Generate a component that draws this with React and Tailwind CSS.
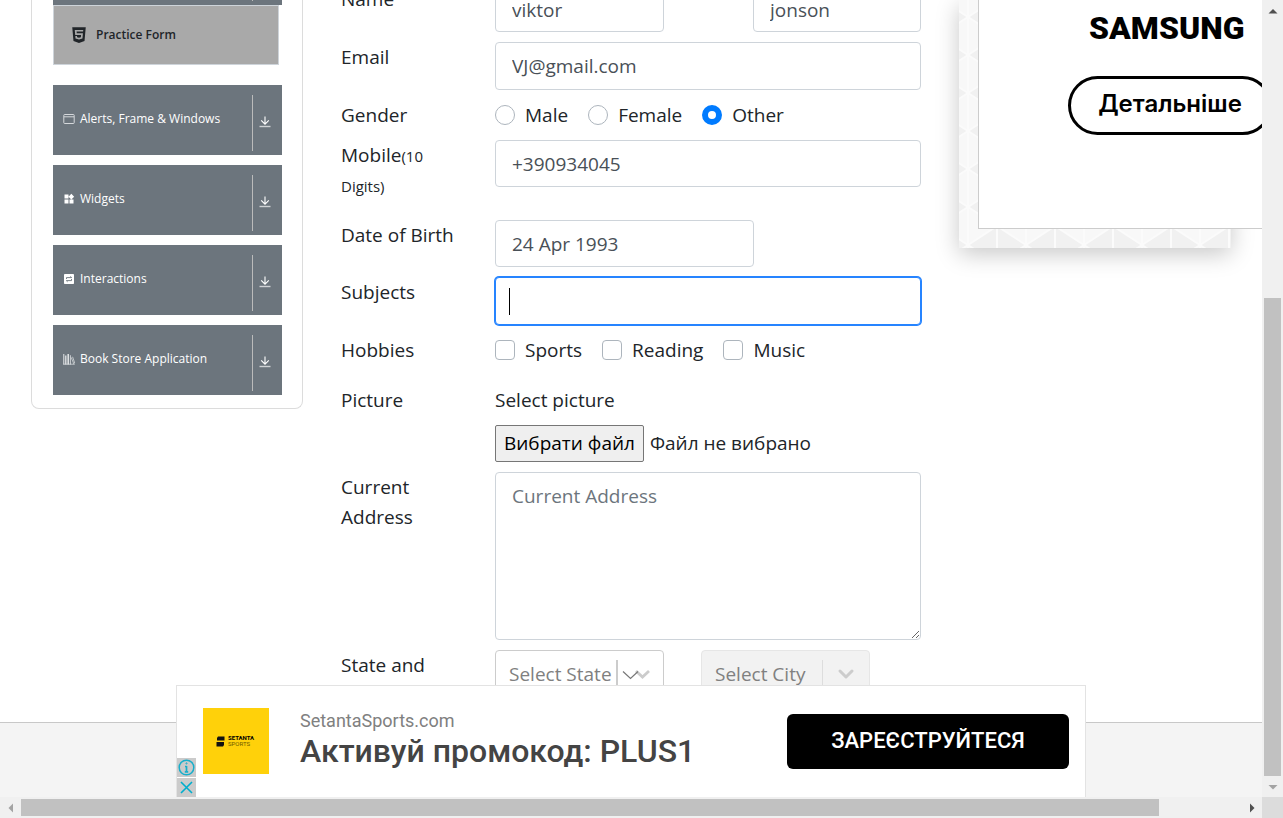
import { useState } from "react";
import { FaHtml5 } from "react-icons/fa";
import { MdWidgets } from "react-icons/md";
import { ChevronDown } from "lucide-react";

const field =
  "rounded border border-[#ced4da] bg-white px-4 text-[19px] text-[#495057] outline-none";

function DownIcon() {
  return (
    <svg viewBox="0 0 12 12" className="size-3" fill="none" stroke="#fff">
      <path d="M6 0.5V8M2.2 4.4L6 8.2L9.8 4.4" strokeWidth="1.1" />
      <path d="M0.5 10.5H11.5" strokeWidth="1.4" stroke="#d0d3d6" />
    </svg>
  );
}

function WindowIcon() {
  return (
    <svg viewBox="0 0 12 12" className="size-3" fill="none" stroke="#d5d8db">
      <rect x="0.8" y="1.5" width="10.4" height="9" rx="0.8" />
      <path d="M1 3.8H11" />
    </svg>
  );
}

function SwapIcon() {
  return (
    <svg viewBox="0 0 12 12" className="size-3">
      <rect x="1" y="1" width="10" height="10" rx="0.8" fill="#fff" />
      <path
        d="M3.5 6V4.6H8.6M7.4 3.4L8.7 4.6M8.5 6V7.6H3.4M4.6 8.8L3.3 7.6"
        fill="none"
        stroke="#6c757d"
        strokeWidth="0.9"
      />
    </svg>
  );
}

function BooksIcon() {
  return (
    <svg viewBox="0 0 12 12" className="size-3" fill="none" stroke="#e4e6e8">
      <path d="M0.8 1V11.5" strokeWidth="1" />
      <path d="M2.8 2.5V11.5" strokeWidth="1.3" />
      <path d="M5.2 1V11.5" strokeWidth="1.5" />
      <path d="M7.4 2.2V11.5" strokeWidth="0.8" />
      <path d="M8.2 4.4L11 11.4M9.6 3.8L11.8 10.4" strokeWidth="0.7" />
      <path d="M0.3 11.2H11.6" strokeWidth="0.7" />
    </svg>
  );
}

const sections = [
  { title: "Alerts, Frame & Windows", icon: <WindowIcon /> },
  { title: "Widgets", icon: <MdWidgets className="size-3" /> },
  { title: "Interactions", icon: <SwapIcon /> },
  { title: "Book Store Application", icon: <BooksIcon /> },
];

function Sidebar() {
  return (
    <nav className="w-[272px] shrink-0 self-start rounded-b-lg border border-t-0 border-[#dcdcdc] pr-5 pb-[13px] pl-[21px]">
      <div className="flex h-[5px] justify-end bg-[#6c757d] pr-[29px]">
        <span className="h-px w-px bg-[#bbb]" />
      </div>
      <a
        href="#practice-form"
        className="mr-[3px] mb-5 flex h-[60px] items-center border border-[#ced4da] bg-[#a9a9a9] pl-4 text-[12px] font-semibold text-[#212529]"
      >
        <FaHtml5 className="mr-2 size-[18px]" />
        Practice Form
      </a>
      <div className="flex flex-col gap-2.5">
        {sections.map((s) => (
          <button
            key={s.title}
            type="button"
            className="flex h-[70px] items-start bg-[#6c757d] pt-2.5 text-left text-[12px] text-white"
          >
            <span className="flex h-12 flex-1 items-center gap-[5px] pl-2.5">
              {s.icon}
              {s.title}
            </span>
            <span className="flex h-14 w-[30px] items-center border-l border-[#bbb] pb-0.5 pl-1.5">
              <DownIcon />
            </span>
          </button>
        ))}
      </div>
    </nav>
  );
}

function Row({ label, htmlFor, className = "", children }) {
  const Label = htmlFor ? "label" : "span";
  return (
    <div className={`grid grid-cols-[88px_1fr] gap-x-[66px] ${className}`}>
      <Label htmlFor={htmlFor} className="leading-[30px]">
        {label}
      </Label>
      <div className="min-w-0">{children}</div>
    </div>
  );
}

function Choice({ type, name, label, ...rest }) {
  const shape =
    type === "radio"
      ? "rounded-full checked:border-[6px] checked:border-[#007bff]"
      : "rounded checked:bg-[#007bff]";
  return (
    <label className="flex items-center gap-2.5 leading-[30px]">
      <input
        type={type}
        name={name}
        className={`size-5 appearance-none border border-[#adb5bd] bg-white ${shape}`}
        {...rest}
      />
      {label}
    </label>
  );
}

function PracticeForm() {
  const [gender, setGender] = useState("Other");
  return (
    <form
      id="practice-form"
      className="ml-[38px] -mt-4 flex w-[580px] shrink-0 flex-col gap-2.5 text-[19px] text-[#212529]"
    >
      <Row label="Name" htmlFor="first">
        <div className="flex justify-between">
          <input id="first" defaultValue="viktor" className={`${field} h-12 w-[169px] pt-1`} />
          <input
            aria-label="Last name"
            defaultValue="jonson"
            className={`${field} h-12 w-[168px] pt-1`}
          />
        </div>
      </Row>
      <Row label="Email" htmlFor="email">
        <input id="email" defaultValue="VJ@gmail.com" className={`${field} h-12 w-full`} />
      </Row>
      <Row label="Gender" className="h-[30px]">
        <div className="flex gap-5">
          {["Male", "Female", "Other"].map((g) => (
            <Choice
              key={g}
              type="radio"
              name="gender"
              label={g}
              checked={gender === g}
              onChange={() => setGender(g)}
            />
          ))}
        </div>
      </Row>
      <Row
        htmlFor="mobile"
        className="h-[70px]"
        label={
          <>
            Mobile<small className="text-[15px] leading-none">(10 Digits)</small>
          </>
        }
      >
        <input id="mobile" defaultValue="+390934045" className={`${field} block h-[47px] w-full`} />
      </Row>
      <Row
        htmlFor="dob"
        className="h-[47px]"
        label={<span className="whitespace-nowrap">Date of Birth</span>}
      >
        <input id="dob" defaultValue="24 Apr 1993" className={`${field} block h-[47px] w-[259px]`} />
      </Row>
      <Row label="Subjects" htmlFor="subjects">
        <div className="flex h-12 items-center rounded border border-[#2684ff] bg-white px-[13px] ring-1 ring-[#2684ff]">
          <span className="h-[27px] w-px bg-black" />
          <input id="subjects" className="min-w-0 flex-1 bg-transparent outline-none" />
        </div>
      </Row>
      <Row label="Hobbies" className="h-10">
        <div className="flex gap-5">
          {["Sports", "Reading", "Music"].map((h) => (
            <Choice key={h} type="checkbox" name="hobbies" label={h} />
          ))}
        </div>
      </Row>
      <Row label="Picture">
        <p className="leading-[30px]">Select picture</p>
        <label className="mt-2.5 flex items-center gap-1.5">
          <input type="file" className="sr-only" />
          <span className="flex h-[37px] items-center rounded-xs border border-[#767676] bg-[#efefef] px-2 text-black">
            Вибрати файл
          </span>
          Файл не вибрано
        </label>
      </Row>
      <Row label="Current Address" htmlFor="address">
        <textarea
          id="address"
          placeholder="Current Address"
          className={`${field} block h-[168px] w-full resize py-2 leading-[30px] placeholder:text-[#6c757d]`}
        />
      </Row>
      <Row label="State and City" htmlFor="state">
        <div className="flex gap-[37px] text-[#808080]">
          <div className="relative">
            <select
              id="state"
              className="h-12 w-[169px] appearance-none rounded border border-[#ccc] bg-white pl-[13px]"
            >
              <option>Select State</option>
            </select>
            <span className="pointer-events-none absolute inset-y-0 right-3 flex items-center">
              <span className="mr-1 h-7 w-0.5 bg-[#ccc]" />
              <svg viewBox="0 0 30 20" className="h-5 w-[30px]" fill="none">
                <path d="M14 7L20.5 13L27 7" stroke="#ccc" strokeWidth="2.8" />
                <path d="M1 7.5L8.5 14.5L16 7.5" stroke="#777" strokeWidth="1.2" />
              </svg>
            </span>
          </div>
          <div className="relative">
            <select
              aria-label="City"
              disabled
              className="h-12 w-[169px] appearance-none rounded border border-[#e6e6e6] bg-[#f2f2f2] pl-[13px] opacity-100"
            >
              <option>Select City</option>
            </select>
            <span className="pointer-events-none absolute inset-y-0 right-3 flex items-center">
              <span className="mr-[11px] h-7 w-px bg-[#ddd]" />
              <ChevronDown className="size-6 text-[#ccc]" strokeWidth={3} />
            </span>
          </div>
        </div>
      </Row>
    </form>
  );
}

function SideAd() {
  return (
    <aside className="relative ml-[38px] h-[248px] w-[272px] shrink-0 bg-[#f6f6f6] shadow-[0_6px_22px_rgba(0,0,0,0.22)]">
      <svg className="absolute inset-0 size-full">
        <defs>
          <pattern id="tri" width="58" height="38" patternUnits="userSpaceOnUse" x="9" y="17">
            <rect width="58" height="38" fill="#f8f8f8" />
            <path d="M0 0H58L29 19ZM0 38H58L29 19Z" fill="#f1f1f1" />
            <path
              d="M0 0L58 38M58 0L0 38M0 0V38M29 0V38M58 0V38"
              stroke="#fbfbfb"
              strokeWidth="2"
              fill="none"
            />
          </pattern>
        </defs>
        <rect width="100%" height="100%" fill="url(#tri)" />
      </svg>
      <div className="absolute top-0 left-[19px] flex h-[229px] w-[336px] flex-col border border-t-0 border-[#ccc] bg-white pt-2 pl-[89px] text-black">
        <p className="pl-[21px] font-[Roboto,sans-serif] text-[32px] leading-10 font-black">
          SAMSUNG
        </p>
        <button
          type="button"
          className="mt-7 h-[59px] w-[204px] rounded-full border-[3px] border-black pb-1 font-[Inter,sans-serif] text-[24px] font-semibold"
        >
          Детальніше
        </button>
      </div>
    </aside>
  );
}

function BottomAd() {
  return (
    <aside className="absolute inset-x-44 bottom-0 flex h-28 border border-b-0 border-[#e3e3e3] bg-white font-[Roboto,sans-serif]">
      <div className="flex w-[19px] flex-col justify-end gap-px">
        <button type="button" aria-label="AdChoices" className="size-[19px] bg-[#cbcbcb]">
          <svg viewBox="0 0 19 19" fill="none" stroke="#17aecb">
            <circle cx="9.5" cy="9.5" r="7.3" strokeWidth="1.5" />
            <path d="M9.5 8V14M8 8.5H9.5M7.8 13.8H11.2" strokeWidth="1.7" />
            <circle cx="9.5" cy="5.4" r="0.6" />
          </svg>
        </button>
        <button type="button" aria-label="Close" className="size-[19px] bg-[#cbcbcb]">
          <svg viewBox="0 0 19 19" fill="none" stroke="#00aecd" strokeWidth="1.6">
            <path d="M4 4L15 15M15 4L4 15" />
          </svg>
        </button>
      </div>
      <div className="mt-[22px] ml-[7px] flex size-[66px] items-center gap-[3px] bg-[#ffd10a] pl-[13px]">
        <svg viewBox="0 0 9 11" className="h-[11px] w-[9px] shrink-0">
          <path d="M2 0.5H8.5V4.5H1V2ZM0.5 6H8V9L7 10.5H0.5Z" fill="#111" />
        </svg>
        <div className="text-[6px] leading-[6px] text-black">
          <b className="block">SETANTA</b>
          <span className="block text-[#6b5800]">SPORTS</span>
        </div>
      </div>
      <div className="ml-[31px] flex-1 pt-[23px]">
        <p className="text-[18px] leading-6 text-[#808080]">SetantaSports.com</p>
        <p className="text-[32px] leading-9 font-medium whitespace-nowrap text-[#444]">
          Активуй промокод: PLUS1
        </p>
      </div>
      <button
        type="button"
        className="mt-7 mr-4 h-[55px] w-[282px] rounded-md bg-black pb-0.5 text-[22px] font-medium text-white"
      >
        ЗАРЕЄСТРУЙТЕСЯ
      </button>
    </aside>
  );
}

function Arrow({ d, color }) {
  return (
    <span className="flex size-[21px] shrink-0 items-center justify-center">
      <svg viewBox="0 0 10 10" className="size-2.5">
        <path d={d} fill={color} />
      </svg>
    </span>
  );
}

export default function App() {
  return (
    <div className="flex h-screen flex-col overflow-hidden bg-white font-['Open_Sans','Noto_Sans',sans-serif]">
      <div className="flex min-h-0 flex-1">
        <div className="relative flex min-w-0 flex-1 flex-col overflow-hidden">
          <main className="flex min-h-0 flex-1 items-start overflow-hidden pl-[31px]">
            <Sidebar />
            <PracticeForm />
            <SideAd />
          </main>
          <footer className="h-[75px] shrink-0 border-t border-[#c8c8c8] bg-[#f4f4f4]" />
          <BottomAd />
        </div>
        <div className="flex w-[21px] shrink-0 flex-col bg-[#f0f0f0]">
          <Arrow d="M0.5 7.5L5 3L9.5 7.5Z" color="#505050" />
          <div className="flex-[277]" />
          <div className="mx-0.5 flex-[478] bg-[#c1c1c1]" />
          <Arrow d="M0.5 3L5 7.5L9.5 3Z" color="#a3a3a3" />
        </div>
      </div>
      <div className="flex h-[21px] shrink-0 bg-[#f0f0f0]">
        <Arrow d="M7 0.5L2.5 5L7 9.5Z" color="#a3a3a3" />
        <div className="my-0.5 flex-[1138] bg-[#c1c1c1]" />
        <div className="flex-[82]" />
        <Arrow d="M3 0.5L7.5 5L3 9.5Z" color="#505050" />
        <div className="w-[21px] bg-[#dcdcdc]" />
      </div>
    </div>
  );
}
